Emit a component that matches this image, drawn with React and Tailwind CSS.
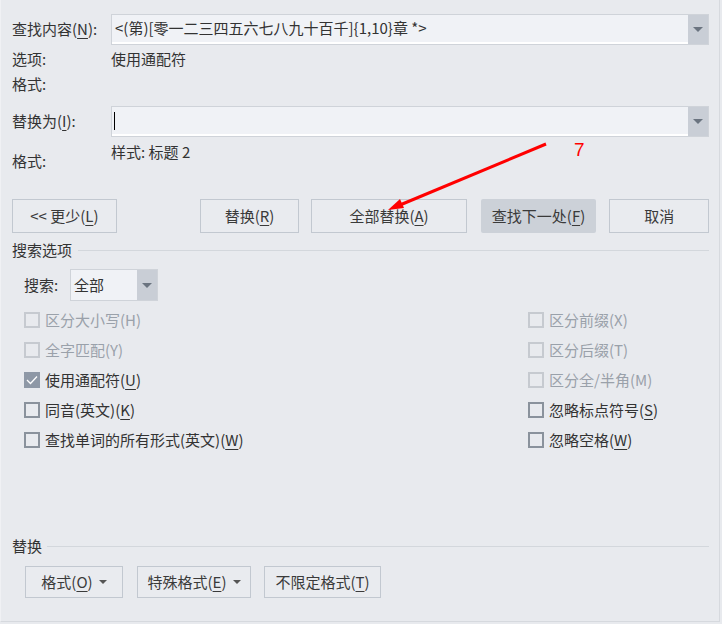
import React from "react";

const font = { fontFamily: '"Noto Sans CJK SC", "Noto Sans", sans-serif' };

function Arrow() {
  return (
    <div className="flex h-full w-[20px] items-center justify-center bg-[#c9ced6]">
      <div className="h-0 w-0 border-x-[5px] border-t-[5px] border-x-transparent border-t-[#6b7480]" />
    </div>
  );
}

function Btn({ w, children, filled, className = "" }) {
  return (
    <div
      className={
        "flex h-full items-center justify-center text-[15px] text-[#3a3a3a] " +
        (filled ? "rounded-[2px] bg-[#ccd1d8]" : "border border-[#c2c8d0] bg-[#e9ebef]") +
        " " +
        w +
        " " +
        className
      }
    >
      {children}
    </div>
  );
}

function Check({ label, disabled, checked }) {
  return (
    <div className="flex h-[30px] items-center">
      {checked ? (
        <div className="flex h-[16px] w-[16px] items-center justify-center bg-[#8e98a6]">
          <svg width="12" height="10" viewBox="0 0 12 10">
            <path d="M1 5 L4.5 8.5 L11 1.5" stroke="#fff" strokeWidth="1.3" fill="none" />
          </svg>
        </div>
      ) : (
        <div
          className={
            "h-[16px] w-[16px] border-2 " +
            (disabled ? "border-[#c6cad0]" : "border-[#8a929c]")
          }
        />
      )}
      <span
        className={
          "ml-[5px] text-[15px] " + (disabled ? "text-[#9aa1aa]" : "text-[#333]")
        }
      >
        {label}
      </span>
    </div>
  );
}

const U = ({ children }) => <u className="underline underline-offset-[3px]">{children}</u>;

export default function App() {
  return (
    <div
      className="relative h-[624px] w-[722px] overflow-hidden bg-[#e8eaee] text-[#333]"
      style={font}
    >
      <div className="flex h-[622px] w-[720px] flex-col border-b border-r border-l border-b-[#d6d9de] border-r-[#d6d9de] border-l-[#f0f1f4] pl-[11px] pr-[10px]">
        {/* find row */}
        <div className="mt-[14px] flex h-[31px] items-center">
          <div className="w-[99px] text-[15px]">
            查找内容(<U>N</U>):
          </div>
          <div className="flex h-full flex-1 border border-[#cfd3d9] bg-[#f0f2f6]">
            <div className="flex flex-1 items-center border-b-2 border-b-white pl-[3px] text-[15px] text-[#333]">
              &lt;(第)[零一二三四五六七八九十百千]{"{1,10}"}章 *&gt;
            </div>
            <Arrow />
          </div>
        </div>
        <div className="mt-[2px] flex h-[24px] items-center text-[15px]">
          <div className="w-[99px]">选项:</div>
          <div>使用通配符</div>
        </div>
        <div className="flex h-[26px] items-center text-[15px]">
          <div className="w-[99px]">格式:</div>
        </div>
        {/* replace row */}
        <div className="mt-[9px] flex h-[31px] items-center">
          <div className="w-[99px] text-[15px]">
            替换为(<U>I</U>):
          </div>
          <div className="flex h-full flex-1 border border-[#cfd3d9] bg-[#f0f2f6]">
            <div className="flex flex-1 items-center border-b-2 border-b-white pl-[2px]">
              <div className="h-[18px] w-[1px] bg-black" />
            </div>
            <Arrow />
          </div>
        </div>
        <div className="flex h-[36px] text-[15px]">
          <div className="w-[99px] pt-[14px] leading-[20px]">格式:</div>
          <div className="pt-[5px] leading-[20px]">样式: 标题 2</div>
        </div>
        {/* buttons */}
        <div className="mt-[26px] flex h-[34px]">
          <Btn w="w-[105px]">
            &lt;&lt; 更少(<U>L</U>)
          </Btn>
          <Btn w="w-[100px]" className="ml-[83px]">
            替换(<U>R</U>)
          </Btn>
          <Btn w="w-[156px]" className="ml-[12px]">
            全部替换(<U>A</U>)
          </Btn>
          <Btn w="w-[116px]" filled className="ml-[14px]">
            查找下一处(<U>F</U>)
          </Btn>
          <Btn w="w-[100px]" className="ml-[13px]">
            取消
          </Btn>
        </div>
        {/* search options header */}
        <div className="mt-[7px] flex h-[20px] items-center text-[15px]">
          <span>搜索选项</span>
          <div className="ml-[6px] h-[1px] flex-1 bg-[#d3d7dc]" />
        </div>
        <div className="ml-[12px] mt-[9px] flex h-[32px] items-center">
          <div className="w-[46px] text-[15px]">搜索:</div>
          <div className="flex h-full w-[88px] border border-[#cfd3d9] bg-[#f0f2f6]">
            <div className="flex flex-1 items-center pl-[3px] text-[15px]">全部</div>
            <Arrow />
          </div>
        </div>
        <div className="ml-[12px] mt-[4px] flex">
          <div className="flex w-[504px] flex-col">
            <Check label="区分大小写(H)" disabled />
            <Check label="全字匹配(Y)" disabled />
            <Check label={<>使用通配符(<U>U</U>)</>} checked />
            <Check label={<>同音(英文)(<U>K</U>)</>} />
            <Check label={<>查找单词的所有形式(英文)(<U>W</U>)</>} />
          </div>
          <div className="flex flex-col">
            <Check label="区分前缀(X)" disabled />
            <Check label="区分后缀(T)" disabled />
            <Check label="区分全/半角(M)" disabled />
            <Check label={<>忽略标点符号(<U>S</U>)</>} />
            <Check label={<>忽略空格(<U>W</U>)</>} />
          </div>
        </div>
        {/* replace header */}
        <div className="mt-[81px] flex h-[20px] items-center text-[15px]">
          <span>替换</span>
          <div className="ml-[5px] h-[1px] flex-1 bg-[#d3d7dc]" />
        </div>
        <div className="ml-[13px] mt-[10px] flex h-[32px]">
          <Btn w="w-[98px]">
            格式(<U>O</U>)
            <span className="ml-[6px] h-0 w-0 border-x-[4px] border-t-[4px] border-x-transparent border-t-[#555]" />
          </Btn>
          <Btn w="w-[114px]" className="ml-[14px]">
            特殊格式(<U>E</U>)
            <span className="ml-[6px] h-0 w-0 border-x-[4px] border-t-[4px] border-x-transparent border-t-[#555]" />
          </Btn>
          <Btn w="w-[117px]" className="ml-[13px]">
            不限定格式(<U>T</U>)
          </Btn>
        </div>
      </div>

      {/* red annotation arrow */}
      <svg className="pointer-events-none absolute left-0 top-0" width="722" height="624">
        <line x1="546" y1="144" x2="400" y2="205" stroke="#ff0000" strokeWidth="3" />
        <polygon points="388,210 400,199 404,208" fill="#ff0000" />
      </svg>
      <div
        className="absolute left-[574px] top-[139px] text-[19px] leading-[22px] text-[#ff0000]"
        style={{ fontFamily: '"Liberation Sans", sans-serif' }}
      >
        7
      </div>
    </div>
  );
}
